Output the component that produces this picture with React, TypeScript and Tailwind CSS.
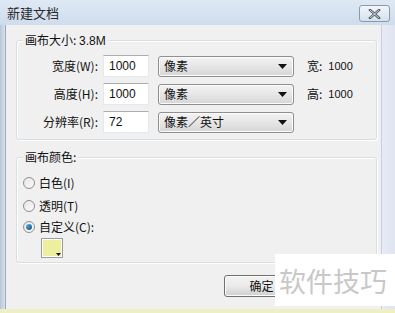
import React from "react";

const font = { fontFamily: '"Noto Sans CJK SC", "Liberation Sans", sans-serif' };

function Select({ text }: { text: string }) {
  return (
    <div className="w-[136px] h-[21px] rounded-[3px] border border-[#8e8f8f] bg-gradient-to-b from-[#f4f4f4] via-[#e6e6e6] to-[#d6d6d6] flex items-center pl-[5px] pr-[6px] shadow-[inset_0_0_0_1px_#fbfbfb]">
      <span className="flex-1 text-[12px] text-[#111] leading-none">{text}</span>
      <svg width="9" height="5" viewBox="0 0 9 5"><path d="M0 0h9L4.5 5z" fill="#111" /></svg>
    </div>
  );
}

function Row({ label, value, unit, extra }: { label: string; value: string; unit: string; extra?: [string, string] }) {
  return (
    <div className="flex items-center h-[22px]">
      <div className="w-[81px] text-right text-[12px] text-[#111]">{label}</div>
      <div className="ml-[5px] w-[46px] h-[22px] bg-white border border-[#e3e9ef] border-t-[#abadb3] flex items-center pl-[5px] text-[12px] text-[#111]" style={{ fontFamily: '"Liberation Sans", sans-serif' }}>{value}</div>
      <div className="ml-[9px]"><Select text={unit} /></div>
      {extra && (
        <div className="ml-[13px] flex items-center text-[12px] text-[#111]">
          <span>{extra[0]}</span>
          <span className="ml-[6px] text-[11px]" style={{ fontFamily: '"Liberation Sans", sans-serif' }}>{extra[1]}</span>
        </div>
      )}
    </div>
  );
}

function Radio({ label, checked }: { label: string; checked?: boolean }) {
  return (
    <div className="flex items-center h-[16px]">
      <div className="w-[12px] h-[12px] rounded-full border border-[#8f8f8f] bg-gradient-to-br from-[#e6e6e6] to-[#fafafa] flex items-center justify-center">
        {checked && <div className="w-[6px] h-[6px] rounded-full bg-gradient-to-br from-[#5fb6e6] to-[#0f4f7e]" />}
      </div>
      <span className="ml-[4px] text-[12px] text-[#111]">{label}</span>
    </div>
  );
}

export default function App() {
  return (
    <div className="relative w-[395px] h-[313px] overflow-hidden flex flex-col bg-[#dde7f3]" style={font}>
      {/* title bar */}
      <div className="h-[25px] flex items-center pl-[7px] pr-[4px] bg-gradient-to-b from-[#dfe9f5] to-[#cfdcec]">
        <span className="text-[13px] text-[#2a2a2a] flex-1">新建文档</span>
        <div className="w-[31px] h-[17px] mt-[2px] mr-[1px] rounded-[3px] border border-[#8a9aae] bg-gradient-to-b from-[#f3f6fa] to-[#d6e0ec] flex items-center justify-center">
          <svg width="13" height="10" viewBox="0 0 13 10">
            <path d="M2 1 L11 9 M11 1 L2 9" stroke="#4a5564" strokeWidth="2.4" strokeLinecap="square" />
            <path d="M2 1 L11 9 M11 1 L2 9" stroke="#ffffff" strokeWidth="0.8" />
          </svg>
        </div>
      </div>
      {/* body */}
      <div className="flex h-[284px]">
        <div className="w-[5px] bg-gradient-to-r from-[#b9c6d6] to-[#d7e2ef]" />
        <div className="w-[376px] bg-[#f0f0f0] border-l border-[#a0aab6] pl-[10px] pr-[4px] pt-[15px] flex flex-col">
          {/* group 1 */}
          <div className="relative h-[100px] border border-[#d5dfe5] rounded-[3px] shadow-[inset_1px_1px_0_#fff,1px_1px_0_#fff] pt-[14px] flex flex-col gap-[6px]">
            <div className="absolute left-[6px] top-[-9px] px-[2px] bg-[#f0f0f0] text-[12px] text-[#111] leading-[16px]">画布大小: <span style={{ fontFamily: '"Liberation Sans", sans-serif' }}>3.8M</span></div>
            <Row label="宽度(W):" value="1000" unit="像素" extra={["宽:", "1000"]} />
            <Row label="高度(H):" value="1000" unit="像素" extra={["高:", "1000"]} />
            <Row label="分辨率(R):" value="72" unit="像素／英寸" />
          </div>
          {/* group 2 */}
          <div className="relative mt-[17px] h-[106px] border border-[#d5dfe5] rounded-[3px] shadow-[inset_1px_1px_0_#fff,1px_1px_0_#fff] pt-[17px] pl-[6px] flex flex-col">
            <div className="absolute left-[6px] top-[-9px] px-[2px] bg-[#f0f0f0] text-[12px] text-[#111] leading-[16px]">画布颜色:</div>
            <Radio label="白色(I)" />
            <div className="h-[7px]" />
            <Radio label="透明(T)" />
            <div className="h-[5px]" />
            <Radio label="自定义(C):" checked />
            <div className="mt-[3px] ml-[18px] w-[22px] h-[20px] border border-[#9c9c9c] bg-[#eeee9f] relative shadow-[inset_0_0_0_1px_#fff]">
              <svg className="absolute right-[1px] bottom-[1px]" width="5" height="3" viewBox="0 0 5 3"><path d="M0 0h5L2.5 3z" fill="#111" /></svg>
            </div>
          </div>
          {/* buttons */}
          <div className="mt-[12px] flex pl-[208px]">
            <div className="w-[75px] h-[22px] rounded-[3px] border border-[#707070] bg-gradient-to-b from-[#f2f2f2] via-[#ebebeb] to-[#cfcfcf] flex items-center justify-center text-[12px] text-[#111] shadow-[inset_0_0_0_1px_#fcfcfc]">确定</div>
          </div>
        </div>
        <div className="flex-1 bg-gradient-to-r from-[#e8ebf6] to-[#dfe4f2] border-l border-[#c9d0dc]" />
      </div>
      <div className="h-[4px] bg-[#eef0c4]" />
      {/* watermark */}
      <div className="absolute left-[275px] top-[254px] w-[120px] h-[52px] bg-white flex items-center pl-[4px]">
        <span className="text-[27px] text-[#c8c8c8] leading-none">软件技巧</span>
      </div>
    </div>
  );
}
